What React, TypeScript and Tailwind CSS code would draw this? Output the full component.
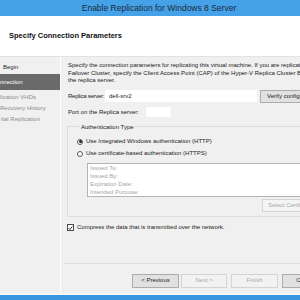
import React from "react";

// Hyper-V "Enable Replication" wizard, connection page (cropped view).
// The step list is cut by the window edge, so only the visible tails are kept.

const navItems = [
  { label: "Begin", state: "done", indent: "pl-[3px]" },
  { label: "nnection", state: "current", indent: "pl-0" },
  { label: "lication VHDs", state: "todo", indent: "pl-0" },
  { label: "Recovery History", state: "todo", indent: "pl-0" },
  { label: "tial Replication", state: "todo", indent: "pl-[1px]" },
];

function Radio({ checked }: { checked?: boolean }) {
  return (
    <span className="flex h-[6px] w-[6px] shrink-0 items-center justify-center rounded-full border border-[#5a5a5a] bg-white">
      {checked && <span className="h-[3px] w-[3px] rounded-full bg-[#222]" />}
    </span>
  );
}

function WizardButton({
  label,
  width,
  disabled,
}: {
  label: string;
  width: string;
  disabled?: boolean;
}) {
  return (
    <div
      className={
        disabled
          ? `${width} flex h-[14px] shrink-0 items-center justify-center border border-[#d4d4d4] bg-[#f2f2f2] text-[#a8a8a8]`
          : `${width} flex h-[14px] shrink-0 items-center justify-center border border-[#acacac] bg-[#e1e1e1] text-[#1e1e1e]`
      }
    >
      {label}
    </div>
  );
}

export default function App() {
  return (
    <div className="flex h-[300px] w-[300px] flex-col overflow-hidden bg-[#f0f0f0] font-['Liberation_Sans',Arial,sans-serif] text-[6px] text-[#1a1a1a]">
      {/* title bar */}
      <div className="flex h-[16px] shrink-0 items-center justify-center whitespace-nowrap bg-[#45a2e8] pl-[18px] text-[8.5px] text-[#1b2a3a]">
        Enable Replication for Windows 8 Server
      </div>

      {/* page header */}
      <div className="flex h-[41px] shrink-0 items-center border-b border-[#e2e2e2] bg-white pl-[9px] text-[7.5px] font-bold text-[#111]">
        Specify Connection Parameters
      </div>

      <div className="flex h-[236px] shrink-0">
        {/* step list */}
        <div className="w-[61px] shrink-0 overflow-hidden border-r border-white pt-[5px]">
          {navItems.map((item) => (
            <div
              key={item.label}
              className={
                item.state === "current"
                  ? `${item.indent} mt-[1px] mb-[2px] flex h-[16px] items-center whitespace-nowrap bg-[#6a6a6a] text-white`
                  : item.state === "done"
                    ? `${item.indent} flex h-[11px] items-center whitespace-nowrap text-[#2a2a2a]`
                    : `${item.indent} flex h-[11px] items-center whitespace-nowrap text-[#8c8c8c]`
              }
            >
              {item.label}
            </div>
          ))}
        </div>

        {/* page body */}
        <div className="flex min-w-0 flex-1 flex-col overflow-hidden pl-[7px]">
          <div className="mt-[5px] whitespace-nowrap leading-[7.5px]">
            <div>Specify the connection parameters for replicating this virtual machine. If you are replicating</div>
            <div>Failover Cluster, specify the Client Access Point (CAP) of the Hyper-V Replica Cluster Broker</div>
            <div>the replica server.</div>
          </div>

          <div className="mt-[5px] flex h-[13px] items-center">
            <span className="w-[37px] shrink-0 whitespace-nowrap tracking-[-0.25px]">Replica server:</span>
            <div className="flex h-[12px] w-[152px] shrink-0 items-center bg-white pl-[4px]">dell-srv2</div>
            <div className="ml-[3px] flex h-[13px] w-[60px] shrink-0 items-center whitespace-nowrap border border-[#acacac] bg-[#e1e1e1] pl-[6px]">
              Verify configuration
            </div>
          </div>

          <div className="mt-[4px] flex h-[11px] items-center">
            <span className="w-[78px] shrink-0 whitespace-nowrap">Port on the Replica server:</span>
            <div className="h-[10px] w-[25px] shrink-0 bg-white" />
          </div>

          <fieldset className="mt-[5px] -ml-[1px] w-[260px] shrink-0 border border-[#dcdcdc] pb-[4px] pl-[9px]">
            <legend className="ml-[3px] px-[1px] leading-[8px]">Authentication Type</legend>
            <div className="mt-[7px] flex h-[8px] items-center gap-[3px] whitespace-nowrap">
              <Radio checked />
              <span>Use Integrated Windows authentication (HTTP)</span>
            </div>
            <div className="mt-[4px] flex h-[8px] items-center gap-[3px] whitespace-nowrap">
              <Radio />
              <span>Use certificate-based authentication (HTTPS)</span>
            </div>
            <div className="mt-[5px] ml-[10px] h-[34px] border border-[#b4b4b4] bg-white pl-[2px] leading-[8.25px] text-[#a6a6a6]">
              <div>Issued To:</div>
              <div>Issued By:</div>
              <div>Expiration Date:</div>
              <div>Intended Purpose:</div>
            </div>
            <div className="mt-[2px] ml-[185px] flex h-[13px] w-[62px] items-center whitespace-nowrap border border-[#d4d4d4] bg-[#f4f4f4] pl-[5px] text-[#a8a8a8]">
              Select Certificate...
            </div>
          </fieldset>

          <div className="mt-[7px] -ml-[1px] flex h-[8px] items-center gap-[3px] whitespace-nowrap">
            <span className="flex h-[7px] w-[7px] shrink-0 items-center justify-center border border-[#4a4a4a] bg-white">
              <svg viewBox="0 0 8 8" className="h-[6px] w-[6px]">
                <path d="M1 4.2 L3.1 6.3 L7 1.5" fill="none" stroke="#111" strokeWidth="1.4" />
              </svg>
            </span>
            <span>Compress the data that is transmitted over the network.</span>
          </div>

          <div className="mt-[31px] -ml-[4px] h-[1px] shrink-0 bg-[#dcdcdc]" />

          <div className="mt-[10px] ml-[64px] flex items-center">
            <WizardButton label="< Previous" width="w-[47px]" />
            <div className="ml-[2px]">
              <WizardButton label="Next >" width="w-[46px]" disabled />
            </div>
            <div className="ml-[4px]">
              <WizardButton label="Finish" width="w-[47px]" disabled />
            </div>
            <div className="ml-[4px]">
              <WizardButton label="Cancel" width="w-[47px]" />
            </div>
          </div>
        </div>
      </div>

      <div className="h-[2px] shrink-0 bg-[#f7f7f7]" />
      <div className="flex-1 bg-[#3a97df]" />
    </div>
  );
}
